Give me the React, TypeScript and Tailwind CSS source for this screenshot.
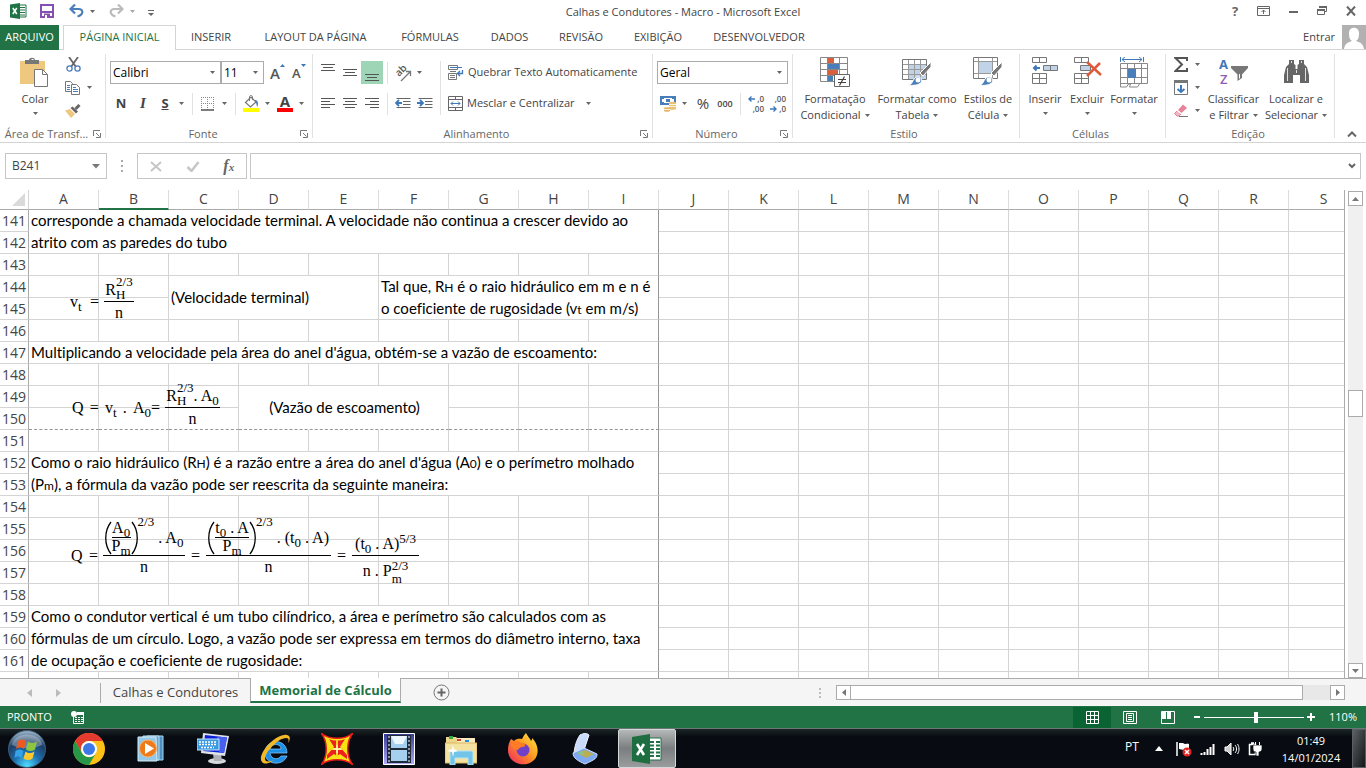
import React from "react";

type Kids = { children?: React.ReactNode };

function Svg({ w, h, children }: { w: number; h: number } & Kids) {
  return (
    <svg width={w} height={h} viewBox={`0 0 ${w} ${h}`} fill="none" aria-hidden="true" className="shrink-0">
      {children}
    </svg>
  );
}

const Arrow = ({ color = "#666" }: { color?: string }) => (
  <Svg w={5} h={3}>
    <path d="M0 0h5L2.500 3z" fill={color} />
  </Svg>
);

function Drop({ label, color }: { label: string; color?: string }) {
  return (
    <button aria-label={label} className="flex h-[22px] w-[10px] shrink-0 items-center justify-center">
      <Arrow color={color} />
    </button>
  );
}

function Tool({ label, active, children }: { label: string; active?: boolean } & Kids) {
  return (
    <button
      aria-label={label}
      className={`flex h-[23px] w-[22px] shrink-0 items-center justify-center ${active ? "bg-[#9fd5b7]" : ""}`}
    >
      {children}
    </button>
  );
}

const Sep = () => <span className="h-[22px] w-px shrink-0 bg-[#e1e1e1]" />;

function Group({ title, width, launcher, children }: { title: string; width: string; launcher?: boolean } & Kids) {
  return (
    <section className={`flex shrink-0 ${width}`}>
      <div className="flex min-w-0 flex-1 flex-col pt-[3px]">
        <div className="flex min-h-0 flex-1">{children}</div>
        <div className="flex h-4 items-center pr-1 text-[#666]">
          <span className="flex-1 text-center whitespace-nowrap">{title}</span>
          {launcher && (
            <button aria-label={`Opções de ${title}`}>
              <Svg w={8} h={8}>
                <path d="M.5 6V.5H7M3 3l3.500 3.500M7.500 3v4.500H3" stroke="#777" />
              </Svg>
            </button>
          )}
        </div>
      </div>
      <span className="my-1 w-px bg-[#e1e1e1]" />
    </section>
  );
}

function Big({ icon, lines, width, arrowBelow }: { icon: React.ReactNode; lines: string[]; width: string; arrowBelow?: boolean }) {
  return (
    <button className={`flex shrink-0 flex-col items-center pt-[4px] text-[#444] ${width}`}>
      <span className="flex h-[34px] items-start justify-center">{icon}</span>
      {lines.map((l, i) => (
        <span key={l} className="flex h-4 items-center gap-1 whitespace-nowrap">
          {l}
          {!arrowBelow && i === lines.length - 1 && <Arrow />}
        </span>
      ))}
      {arrowBelow && (
        <span className="flex h-[13px] items-center">
          <Arrow />
        </span>
      )}
    </button>
  );
}

/* ---------- icons ---------- */

const ExcelSmall = () => (
  <Svg w={17} h={16}>
    <path d="M9 2h7v12H9z" fill="#fff" stroke="#217346" />
    <path d="M10 4.500h5M10 7h5M10 9.500h5M10 12h5" stroke="#217346" />
    <path d="M0 1.500 10 0v16L0 14.500z" fill="#217346" />
    <path d="m2.800 5 4 6M6.800 5l-4 6" stroke="#fff" strokeWidth="1.600" />
  </Svg>
);

const Save = () => (
  <Svg w={14} h={14}>
    <path d="M1 1h12v12H1z" stroke="#8550b0" strokeWidth="2" />
    <path d="M1 8h12" stroke="#8550b0" strokeWidth="2" />
    <path d="M4 9.500h6V14H4z" fill="#8550b0" />
    <path d="M5 11h2v3H5z" fill="#fff" />
  </Svg>
);

const Undo = ({ color }: { color: string }) => (
  <Svg w={15} h={14}>
    <path d="M2 5h7.500c5.500 0 5 6-1 7.500" stroke={color} strokeWidth="2.200" />
    <path d="M6 .5 1.500 5 6 9.500" stroke={color} strokeWidth="2.200" />
  </Svg>
);

const Paste = () => (
  <Svg w={30} h={31}>
    <path d="M0 4h25v23H0z" fill="#edc87e" />
    <path d="M5 3h4c0-3 6-3 6 0h4v4H5z" fill="#777" />
    <path d="M11.500 2.500h2" stroke="#fff" />
    <path d="M14.500 12.500h8l5 5v12h-13z" fill="#fff" stroke="#777" />
    <path d="M22.500 12.500v5h5" stroke="#777" />
  </Svg>
);

const Cut = () => (
  <Svg w={15} h={15}>
    <path d="m3 0 7 10M12 0 5 10" stroke="#666" strokeWidth="1.800" />
    <circle cx="3.500" cy="11.500" r="2.600" stroke="#4a7ebb" strokeWidth="1.300" />
    <circle cx="11.500" cy="11.500" r="2.600" stroke="#4a7ebb" strokeWidth="1.300" />
  </Svg>
);

const Copy = () => (
  <Svg w={16} h={14}>
    <path d="M.5.5h5l2 2v8h-7z" fill="#fff" stroke="#777" />
    <path d="M2 4.500h3M2 6.500h3M2 8.500h3" stroke="#4a7ebb" />
    <path d="M6.500 3.500h5l3 3v7h-8z" fill="#fff" stroke="#777" />
    <path d="M8 6.500h3M8 8.500h5M8 10.500h5" stroke="#4a7ebb" />
  </Svg>
);

const Brush = () => (
  <Svg w={16} h={14}>
    <path d="M0 6.500 5 5l5 5-4 4z" fill="#edc87e" />
    <path d="m5.500 4 5.500 5.500 2-2L7.500 2.500z" fill="#666" />
    <path d="m10.500 5 4-4" stroke="#666" strokeWidth="3" />
  </Svg>
);

const Borders = () => (
  <Svg w={14} h={14}>
    <path d="M.5 0v13M6.500 0v13M12.500 0v13M0 .5h13M0 6.500h13" stroke="#888" strokeDasharray="1 1" />
    <path d="M0 13h13" stroke="#555" strokeWidth="1.500" />
  </Svg>
);

const Bucket = () => (
  <Svg w={16} h={17}>
    <path d="M2.500 7.500 8 2l5 5-5.500 5z" fill="#fff" stroke="#777" strokeWidth="1.200" />
    <path d="M6.500 6V2c0-2 3-2 3 0v3" stroke="#777" />
    <path d="M12 5c3 0 3.500 3 2.500 7-1.500-2-.5-4-2.500-5z" fill="#4a7ebb" />
    <path d="M0 13h16v4H0z" fill="#ff0" />
  </Svg>
);

const AlignIcon = ({ widths, right, center }: { widths: number[]; right?: boolean; center?: boolean }) => (
  <Svg w={14} h={11}>
    {widths.map((w, i) => {
      const x = right ? 14 - w : center ? (14 - w) / 2 : 0;
      return <path key={i} d={`M${x} ${i * 3 + 0.5}h${w}`} stroke="#555" />;
    })}
  </Svg>
);

const VAlign = ({ y }: { y: number }) => (
  <Svg w={14} h={20}>
    <path d={`M0 ${y + 0.5}h14M2 ${y + 3.5}h10M0 ${y + 6.5}h14`} stroke="#555" />
  </Svg>
);

const Orient = () => (
  <Svg w={18} h={18}>
    <g transform="translate(5 13) rotate(-45)">
      <text x="0" y="0" fontSize="10" fill="#555" fontFamily="Open Sans" fontWeight="600">
        ab
      </text>
    </g>
    <path d="m7 17 9-9M12 7.500h4.500V12" stroke="#777" strokeWidth="1.300" />
  </Svg>
);

const Indent = ({ flip }: { flip?: boolean }) => (
  <Svg w={16} h={11}>
    <path d="M1.500.5h14M8 3.500h7.500M8 6.500h7.500M1.500 9.500h14" stroke="#666" />
    <path d={flip ? "M0 5h6M3 2l3 3-3 3" : "M1 5h6M4 2 1 5l3 3"} stroke="#3f78b8" strokeWidth="1.800" />
  </Svg>
);

const Wrap = () => (
  <Svg w={16} h={15}>
    <path d="M.5.5h9v4h-9zM.5 8.500h8v6h-8zM2 10.500h5M2 12.500h5" stroke="#777" />
    <path d="M2 2.500h12" stroke="#3f78b8" />
    <path d="M2 6.500h6" stroke="#777" />
    <path d="M14.500 5v3.500h-5M12 6 9.500 8.500 12 11" stroke="#3f78b8" strokeWidth="1.300" />
  </Svg>
);

const Merge = () => (
  <Svg w={15} h={15}>
    <path d="M.5.5h14v14H.5zM.5 3.500h14M.5 11.500h14M7.500 0v3.500M7.500 11.500V15" stroke="#666" />
    <path d="M3 7.500h9M5 5.500l-2 2 2 2M10 5.500l2 2-2 2" stroke="#3f78b8" />
  </Svg>
);

const Money = () => (
  <Svg w={17} h={16}>
    <path d="M1 1h14v7H1z" fill="#fff" stroke="#4a7ebb" strokeWidth="2" />
    <path d="M0 0h4v3H0zM12 0h4v3h-4zM0 6h4v3H0zM6 3h4v3H6z" fill="#4a7ebb" />
    <path d="M9 6.500c0-1 7-1 7 0V13c0 1-7 1-7 0z" fill="#edc070" />
    <path d="M4 12c0-1 6-1 6 0v3c0 1-6 1-6 0z" fill="#e5b566" />
    <path d="M9 8.500h7M9 10.500h7M4 13.500h6" stroke="#fff" strokeWidth=".8" />
  </Svg>
);

const Decimals = ({ less }: { less?: boolean }) => (
  <span className="relative flex h-[20px] w-[16px] flex-col text-right text-[8px] leading-[10px] font-semibold text-[#555]">
    <span>{less ? ",00" : ",0"}</span>
    <span>{less ? ",0" : ",00"}</span>
    <span className={less ? "absolute bottom-[2px] left-0" : "absolute top-[2px] left-0"}>
      <Svg w={7} h={6}>
        <path d={less ? "M0 3h6M3.500.5 6 3 3.500 5.500" : "M7 3H1M3.500.5 1 3l2.500 2.500"} stroke="#3f78b8" strokeWidth="1.400" />
      </Svg>
    </span>
  </span>
);

const CondFormat = () => (
  <Svg w={30} h={31}>
    <path d="M.5.5h27v24H.5z" fill="#fff" />
    <path d="M8 1h6v6H8zM8 13h10v6H8z" fill="#d9603f" />
    <path d="M8 7h11v6H8zM8 19h5v6H8z" fill="#4a7ebb" />
    <path d="M.5.5h27v24H.5zM.5 6.500h27M.5 12.500h27M.5 18.500h27M7.500.5v24M19.500.5v24" stroke="#888" />
    <path d="M14.500 17.500h15v12h-15z" fill="#fff" stroke="#666" />
    <path d="M18 22.500h8M18 25.500h8M24.500 19.500l-5 9" stroke="#444" strokeWidth="1.200" />
  </Svg>
);

const PaintBrush = () => (
  <>
    <path d="m29 5-11 11 3 3L29 10z" fill="#777" stroke="#fff" />
    <path d="M6 28c6 0 4-9 11-8 4 1 4 7-3 8-3 .5-6 .5-8 0z" fill="#4a7ebb" stroke="#fff" />
    <circle cx="16" cy="23" r="2.500" fill="#fff" />
  </>
);

const TableFormat = () => (
  <Svg w={30} h={30}>
    <path d="M.5 2.500h24v20H.5z" fill="#fff" />
    <path d="M7 8h17v14H7z" fill="#c1d3e9" />
    <path d="M.5 7.500h24M.5 12.500h24M.5 17.500h24M6.500 3v19M12.500 3v19M18.500 3v19" stroke="#999" />
    <path d="M.5 2.500h24v20H.5z" stroke="#777" />
    <PaintBrush />
  </Svg>
);

const CellStyle = () => (
  <Svg w={30} h={30}>
    <path d="M.5.5h24v21H.5z" fill="#fff" />
    <path d="M6 5h13v11H6z" fill="#c1d3e9" />
    <path d="M.5 4.500h24M.5 16.500h24M5.500 0v21M19.500 0v21" stroke="#999" />
    <path d="M.5.5h24v21H.5z" stroke="#777" />
    <PaintBrush />
  </Svg>
);

const CellsInsert = ({ del }: { del?: boolean }) => (
  <Svg w={30} h={30}>
    <path d="M2.500.5h14v5h-14zM9.500.5v5M2.500 16.500h14v10h-14zM9.500 16.500v10M2.500 21.500h14" stroke="#777" />
    {del ? (
      <>
        <path d="M8.500 8.500h10v5h-10z" fill="#c1d3e9" stroke="#777" />
        <path d="m15 5 14 13M28 6 15 19" stroke="#dd5a3a" strokeWidth="2.500" />
      </>
    ) : (
      <>
        <path d="M13.500 8.500h14v5h-14zM20.500 8.500v5" fill="#c1d3e9" stroke="#777" />
        <path d="M10 11H4M6.500 8.500 4 11l2.500 2.500" stroke="#3f78b8" strokeWidth="2" />
      </>
    )}
  </Svg>
);

const CellsFormat = () => (
  <Svg w={28} h={31}>
    <path d="M.5 0v5M23.500 0v5M2 2.500h20M5 0 2 2.500 5 5M19 0l3 2.500L19 5" stroke="#3f78b8" />
    <path d="M.5 6.500h27v20H.5zM.5 11.500h27M.5 20.500h27M7.500 6.500v20M14.500 6.500v20M21.500 6.500v20" stroke="#888" />
    <path d="M8 12h8v9H8z" fill="#4a7ebb" />
    <path d="M.5 26v4h6l2-3h2l-1 3h8l2-3" stroke="#888" />
  </Svg>
);

const SortFilter = () => (
  <Svg w={29} h={32}>
    <text x="0" y="12" fontSize="13" fontWeight="700" fontFamily="Open Sans" fill="#3f78b8">
      A
    </text>
    <text x="1" y="27" fontSize="13" fontWeight="600" fontFamily="Open Sans" fill="#8e5cb5">
      Z
    </text>
    <path d="M12 9h17v2l-6 6.500V21l-4.500 3v-6.500L12 11z" fill="#777" />
    <path d="M20.500 17v4.500" stroke="#fff" />
  </Svg>
);

const Binoculars = () => (
  <Svg w={27} h={28}>
    <g transform="translate(0 2)">
      <path d="M6 1h5v4l1.500 1v4h2V6L16 5V1h5v4l3 3 2 8v8h-9v-8h-7v8H1v-8l2-8 3-3z" fill="#666" />
      <path d="M4.500 9v13M22.500 9v13M8.500 2v2M18.500 2v2M13.500 11v3" stroke="#fff" strokeWidth=".8" />
    </g>
  </Svg>
);

/* ---------- title bar and ribbon ---------- */

function TitleBar() {
  return (
    <header className="grid h-[25px] shrink-0 grid-cols-[1fr_auto_1fr] items-center">
      <div className="flex items-center pb-[3px] pl-[10px]">
        <ExcelSmall />
        <button aria-label="Salvar" className="ml-[13px]">
          <Save />
        </button>
        <button aria-label="Desfazer" className="mr-[3px] ml-[15px]">
          <Undo color="#4a7ebb" />
        </button>
        <Drop label="Opções de desfazer" />
        <button aria-label="Refazer" className="mr-[3px] ml-[12px] -scale-x-100">
          <Undo color="#bbb" />
        </button>
        <Drop label="Opções de refazer" color="#aaa" />
        <button aria-label="Personalizar barra" className="ml-[11px] pt-1">
          <Svg w={6} h={6}>
            <path d="M0 .5h6" stroke="#666" />
            <path d="M0 3h6L3 6z" fill="#666" />
          </Svg>
        </button>
      </div>
      <h1 className="text-[#444]">Calhas e Condutores - Macro - Microsoft Excel</h1>
      <div className="flex items-center justify-end gap-[15px] pr-2 pb-[3px]">
        <button aria-label="Ajuda" className="w-[14px] text-[13px] leading-4 font-bold text-[#666]">
          ?
        </button>
        <button aria-label="Opções de exibição da faixa">
          <Svg w={14} h={10}>
            <path d="M.5.5h12v9H.5zM.5 2.500h12M6.500 8V4M4.500 6l2-2 2 2" stroke="#666" />
          </Svg>
        </button>
        <button aria-label="Minimizar" className="pt-[3px]">
          <Svg w={14} h={3}>
            <path d="M3 1h9" stroke="#666" strokeWidth="2" />
          </Svg>
        </button>
        <button aria-label="Restaurar">
          <Svg w={14} h={10}>
            <path d="M4.500 2V.5h7v5H10M2.500 3.500h7v5h-7z" stroke="#666" />
            <path d="M4 1h8M2 4h8" stroke="#666" strokeWidth="2" />
          </Svg>
        </button>
        <button aria-label="Fechar">
          <Svg w={14} h={10}>
            <path d="m3 .5 8 9M11 .5l-8 9" stroke="#666" strokeWidth="2" />
          </Svg>
        </button>
      </div>
    </header>
  );
}

const TABS: [string, string][] = [
  ["INSERIR", "w-[70px]"],
  ["LAYOUT DA PÁGINA", "w-[139px]"],
  ["FÓRMULAS", "w-[90px]"],
  ["DADOS", "w-[69px]"],
  ["REVISÃO", "w-[74px]"],
  ["EXIBIÇÃO", "w-[80px]"],
  ["DESENVOLVEDOR", "w-[122px]"],
];

function RibbonTabs() {
  return (
    <nav className="flex h-[25px] shrink-0 text-[#444]">
      <button className="w-[59px] bg-[#217346] text-white">ARQUIVO</button>
      <span className="w-1 border-b border-[#d4d4d4]" />
      <button className="w-[113px] border-x border-t border-[#d4d4d4] pb-px text-[#217346]">PÁGINA INICIAL</button>
      <div className="flex flex-1 border-b border-[#d4d4d4]">
        {TABS.map(([t, w]) => (
          <button key={t} className={`whitespace-nowrap ${w}`}>
            {t}
          </button>
        ))}
        <span className="flex-1" />
        <button className="mr-[7px]">Entrar</button>
        <Svg w={24} h={24}>
          <path d="M0 0h24v24H0z" fill="#b1b1b1" />
          <path d="M7 8c0-7 10-7 10 0 0 8-3 7-3 8 2 1 7 1 8 8H2c1-7 6-7 8-8 0-1-3 0-3-8z" fill="#fff" />
        </Svg>
      </div>
    </nav>
  );
}

function Combo({ label, value, width }: { label: string; value: string; width: string }) {
  return (
    <span className={`grid h-[23px] shrink-0 items-center border border-[#ababab] ${width}`}>
      <select aria-label={label} className="col-start-1 row-start-1 h-full w-full appearance-none bg-transparent px-[2px] text-[12px] text-black">
        <option>{value}</option>
      </select>
      <span className="pointer-events-none col-start-1 row-start-1 justify-self-end pr-[5px]">
        <Arrow />
      </span>
    </span>
  );
}

function Ribbon() {
  return (
    <div className="flex h-[93px] shrink-0 border-b border-[#d4d4d4]">
      <Group title="Área de Transf..." width="w-[106px]" launcher>
        <Big icon={<Paste />} lines={["Colar"]} width="w-[54px] ml-[8px]" arrowBelow />
        <div className="flex flex-col">
          <Tool label="Recortar">
            <Cut />
          </Tool>
          <div className="flex">
            <Tool label="Copiar">
              <Copy />
            </Tool>
            <Drop label="Opções de copiar" />
          </div>
          <Tool label="Pincel de formatação">
            <Brush />
          </Tool>
        </div>
      </Group>

      <Group title="Fonte" width="w-[207px]" launcher>
        <div className="flex flex-col gap-2 pt-2 pl-1">
          <div className="flex items-center">
            <Combo label="Fonte" value="Calibri" width="w-[111px]" />
            <Combo label="Tamanho da fonte" value="11" width="w-[43px]" />
            <button aria-label="Aumentar fonte" className="ml-[6px] flex w-[16px] items-start text-[15px] leading-[18px] font-semibold text-[#555]">
              A
              <Svg w={5} h={3}>
                <path d="M0 3h5L2.500 0z" fill="#3f78b8" />
              </Svg>
            </button>
            <button aria-label="Diminuir fonte" className="ml-[6px] flex w-[16px] items-start text-[13px] leading-[18px] font-semibold text-[#555]">
              A
              <Svg w={5} h={3}>
                <path d="M0 0h5L2.500 3z" fill="#3f78b8" />
              </Svg>
            </button>
          </div>
          <div className="flex items-center text-[13px] text-[#444]">
            <Tool label="Negrito">
              <b>N</b>
            </Tool>
            <Tool label="Itálico">
              <i className="font-['Liberation_Serif',serif] text-[15px] font-bold">I</i>
            </Tool>
            <Tool label="Sublinhado">
              <b className="underline">S</b>
            </Tool>
            <Drop label="Opções de sublinhado" />
            <span className="w-[6px]" />
            <Sep />
            <span className="w-1" />
            <Tool label="Bordas">
              <Borders />
            </Tool>
            <Drop label="Opções de bordas" />
            <span className="w-[6px]" />
            <Sep />
            <span className="w-1" />
            <Tool label="Cor de preenchimento">
              <Bucket />
            </Tool>
            <Drop label="Opções de preenchimento" />
            <span className="w-[2px]" />
            <Tool label="Cor da fonte">
              <span className="flex w-[16px] flex-col items-center border-b-4 border-[#f00] text-[15px] leading-[13px] font-bold">A</span>
            </Tool>
            <Drop label="Opções de cor da fonte" />
          </div>
        </div>
      </Group>

      <Group title="Alinhamento" width="w-[340px]" launcher>
        <div className="flex flex-col gap-2 pt-2 pl-1">
          <div className="flex items-center">
            <Tool label="Alinhar em cima">
              <VAlign y={1} />
            </Tool>
            <Tool label="Alinhar no meio">
              <VAlign y={6} />
            </Tool>
            <Tool label="Alinhar embaixo" active>
              <VAlign y={11} />
            </Tool>
            <span className="w-1" />
            <Sep />
            <span className="w-1" />
            <Tool label="Orientação">
              <Orient />
            </Tool>
            <Drop label="Opções de orientação" />
          </div>
          <div className="flex items-center">
            <Tool label="Alinhar à esquerda">
              <AlignIcon widths={[14, 9, 14, 9]} />
            </Tool>
            <Tool label="Centralizar">
              <AlignIcon widths={[14, 10, 14, 10]} center />
            </Tool>
            <Tool label="Alinhar à direita">
              <AlignIcon widths={[14, 9, 14, 9]} right />
            </Tool>
            <span className="w-1" />
            <Sep />
            <span className="w-1" />
            <Tool label="Diminuir recuo">
              <Indent />
            </Tool>
            <Tool label="Aumentar recuo">
              <Indent flip />
            </Tool>
          </div>
        </div>
        <span className="mt-2 ml-1 h-[54px] w-px bg-[#e1e1e1]" />
        <div className="flex flex-col gap-2 pt-2 pl-[7px] text-[#444]">
          <button className="flex h-[23px] items-center gap-1 whitespace-nowrap">
            <Wrap />
            Quebrar Texto Automaticamente
          </button>
          <div className="flex items-center">
            <button className="flex h-[23px] items-center gap-1 whitespace-nowrap">
              <Merge />
              Mesclar e Centralizar
            </button>
            <span className="w-[9px]" />
            <Drop label="Opções de mesclar" />
          </div>
        </div>
      </Group>

      <Group title="Número" width="w-[140px]" launcher>
        <div className="flex flex-col gap-2 pt-2 pl-1">
          <Combo label="Formato de número" value="Geral" width="w-[131px]" />
          <div className="flex items-center text-[#444]">
            <Tool label="Formato contábil">
              <Money />
            </Tool>
            <Drop label="Opções de moeda" />
            <span className="w-[3px]" />
            <Tool label="Porcentagem">
              <span className="text-[15px]">%</span>
            </Tool>
            <Tool label="Separador de milhares">
              <span className="text-[9px] font-semibold">000</span>
            </Tool>
            <span className="w-1" />
            <Sep />
            <span className="w-1" />
            <Tool label="Aumentar casas decimais">
              <Decimals />
            </Tool>
            <Tool label="Diminuir casas decimais">
              <Decimals less />
            </Tool>
          </div>
        </div>
      </Group>

      <Group title="Estilo" width="w-[227px]">
        <Big icon={<CondFormat />} lines={["Formatação", "Condicional"]} width="w-[80px] ml-[2px]" />
        <Big icon={<TableFormat />} lines={["Formatar como", "Tabela"]} width="w-[84px]" />
        <Big icon={<CellStyle />} lines={["Estilos de", "Célula"]} width="w-[58px]" />
      </Group>

      <Group title="Células" width="w-[146px]">
        <Big icon={<CellsInsert />} lines={["Inserir"]} width="w-[42px] ml-1" arrowBelow />
        <Big icon={<CellsInsert del />} lines={["Excluir"]} width="w-[42px]" arrowBelow />
        <Big icon={<CellsFormat />} lines={["Formatar"]} width="w-[52px]" arrowBelow />
      </Group>

      <Group title="Edição" width="w-[169px]">
        <div className="flex flex-col pl-1">
          <div className="flex">
            <Tool label="Soma">
              <Svg w={14} h={15}>
                <path d="M13 4V1H1.500L8 7.500 1.500 14H13v-3" stroke="#555" strokeWidth="2" />
              </Svg>
            </Tool>
            <Drop label="Opções de soma" />
          </div>
          <div className="flex">
            <Tool label="Preencher">
              <Svg w={14} h={15}>
                <path d="M.5.5h13v14H.5z" stroke="#777" />
                <path d="M0 0h14v3H0z" fill="#777" />
                <path d="M7 5v7M3.500 9 7 12l3.500-3" stroke="#3f78b8" strokeWidth="2" />
              </Svg>
            </Tool>
            <Drop label="Opções de preencher" />
          </div>
          <div className="flex">
            <Tool label="Limpar">
              <Svg w={15} h={13}>
                <path d="m4 6 5-5.500L13 4 7.500 9z" fill="#e8829a" />
                <path d="M3 7 .5 9.500 3 12h2l2-2" fill="#f3b5c3" stroke="#e8829a" />
                <path d="M5 12.500h9" stroke="#777" />
              </Svg>
            </Tool>
            <Drop label="Opções de limpar" />
          </div>
        </div>
        <Big icon={<SortFilter />} lines={["Classificar", "e Filtrar"]} width="w-[63px]" />
        <Big icon={<Binoculars />} lines={["Localizar e", "Selecionar"]} width="w-[62px]" />
      </Group>

      <button aria-label="Recolher faixa de opções" className="mb-[5px] ml-[12px] self-end">
        <Svg w={10} h={6}>
          <path d="m1 5.500 4-4 4 4" stroke="#666" strokeWidth="2" />
        </Svg>
      </button>
    </div>
  );
}

function FormulaBar() {
  return (
    <div className="flex h-[47px] shrink-0 items-start pt-[10px] pr-[5px] pl-[5px]">
      <div className="flex h-[26px] w-[102px] items-center border border-[#c6c6c6] pr-[6px]">
        <input aria-label="Caixa de nome" defaultValue="B241" className="w-full min-w-0 pl-[6px] text-[12px] text-[#444] outline-none" />
        <Svg w={8} h={5}>
          <path d="M0 0h8L4 4.500z" fill="#777" />
        </Svg>
      </div>
      <span className="flex h-[26px] w-[30px] items-center justify-center">
        <Svg w={2} h={12}>
          <path d="M0 1h2M0 6h2M0 11h2" stroke="#aaa" strokeWidth="2" />
        </Svg>
      </span>
      <div className="flex h-[26px] w-[110px] items-center justify-around border border-[#c6c6c6]">
        <button aria-label="Cancelar">
          <Svg w={12} h={11}>
            <path d="m1 1 10 9M11 1 1 10" stroke="#c6c6c6" strokeWidth="2" />
          </Svg>
        </button>
        <button aria-label="Inserir valor">
          <Svg w={14} h={11}>
            <path d="m1.500 6 4 4 7-9" stroke="#c6c6c6" strokeWidth="2.500" />
          </Svg>
        </button>
        <button aria-label="Inserir função" className="font-['Liberation_Serif',serif] text-[16px] leading-4 font-bold text-[#666] italic">
          f<span className="text-[11px]">x</span>
        </button>
      </div>
      <div className="ml-[3px] flex h-[26px] flex-1 items-center border border-[#c6c6c6] pr-1">
        <input aria-label="Barra de fórmulas" className="h-full min-w-0 flex-1 px-2 outline-none" />
        <Svg w={8} h={6}>
          <path d="m1 1 3 3 3-3" stroke="#666" strokeWidth="2" />
        </Svg>
      </div>
    </div>
  );
}

/* ---------- formulas ---------- */

function Frac({ num, den, tall, width }: { num: React.ReactNode; den: React.ReactNode; tall?: boolean; width: string }) {
  const row = tall ? "h-[38px]" : "h-[26px]";
  return (
    <span className={`flex flex-col items-center ${width}`}>
      <span className={`flex items-end justify-center ${row}`}>{num}</span>
      <span className="h-px w-full bg-black" />
      <span className={`flex items-start justify-center pt-[3px] ${row}`}>{den}</span>
    </span>
  );
}

const Sub = ({ children }: Kids) => <span className="relative top-[4px] text-[13px] leading-none">{children}</span>;
const Raised = ({ children }: Kids) => <span className="mb-[3px]">{children}</span>;

const SubSup = ({ sub, sup }: { sub: string; sup: string }) => (
  <span className="flex flex-col text-[13px] leading-[13px]">
    <span>{sup}</span>
    <span>{sub}</span>
  </span>
);

const A0 = () => (
  <span>
    A<Sub>0</Sub>
  </span>
);

const T0A = () => (
  <span>
    t<Sub>0</Sub> . A
  </span>
);

const Pm = () => (
  <span>
    P<Sub>m</Sub>
  </span>
);

const Paren = ({ right }: { right?: boolean }) => (
  <Svg w={7} h={34}>
    <path d={right ? "M1 1c7 9 7 23 0 32" : "M6 1c-7 9-7 23 0 32"} stroke="#000" strokeWidth="1.300" />
  </Svg>
);

const Inner = ({ top, width }: { top: React.ReactNode; width: string }) => (
  <span className={`flex flex-col items-center ${width}`}>
    <span className="h-[17px]">{top}</span>
    <span className="h-px w-full bg-black" />
    <span className="h-[17px]">
      <Pm />
    </span>
  </span>
);

const PowerOf = ({ top, width }: { top: React.ReactNode; width: string }) => (
  <>
    <Paren />
    <Inner width={width} top={top} />
    <Paren right />
    <span className="-mt-[2px] self-start text-[13px] leading-[8px]">2/3</span>
  </>
);

function Formulas() {
  const base = "absolute flex items-center whitespace-nowrap font-['Liberation_Serif',serif] text-[16px] leading-[16px] text-black";
  return (
    <>
      <div className={`${base} top-[85px] left-[70px]`}>
        <span className="mr-[5px] flex w-[29px] justify-between">
          <span>
            v<Sub>t</Sub>
          </span>
          <span>=</span>
        </span>
        <Frac width="w-[30px]" num={<><Raised>R</Raised><SubSup sup="2/3" sub="H" /></>} den="n" />
      </div>
      <div className={`${base} top-[191px] left-[72px]`}>
        <span className="mr-[5px] flex w-[88px] justify-between">
          <span>Q</span>
          <span>=</span>
          <span>
            v<Sub>t</Sub>
          </span>
          <span>.</span>
          <span>
            A<Sub>0</Sub>=
          </span>
        </span>
        <Frac width="w-[55px]" num={<><Raised>R</Raised><SubSup sup="2/3" sub="H" /><Raised>. <A0 /></Raised></>} den="n" />
      </div>
      <div className={`${base} top-[327px] left-[71px]`}>
        <span className="mr-[5px] flex w-[27px] justify-between">
          <span>Q</span>
          <span>=</span>
        </span>
        <Frac
          tall
          width="w-[82px]"
          num={
            <span className="flex items-center">
              <PowerOf width="w-[19px]" top={<A0 />} />
              <span className="ml-1">. <A0 /></span>
            </span>
          }
          den="n"
        />
        <span className="w-[21px] text-center">=</span>
        <Frac
          tall
          width="w-[125px]"
          num={
            <span className="flex items-center">
              <PowerOf width="w-[34px]" top={<T0A />} />
              <span className="ml-1">. (<T0A />)</span>
            </span>
          }
          den="n"
        />
        <span className="w-[21px] text-center">=</span>
        <Frac
          width="w-[67px]"
          num={<><Raised>(<T0A />)</Raised><span className="mb-[10px] text-[13px] leading-[13px]">5/3</span></>}
          den={<><span className="pt-[4px]">n . P</span><SubSup sup="2/3" sub="m" /></>}
        />
      </div>
    </>
  );
}

/* ---------- sheet ---------- */

type Cell = { span?: number; rows?: number; center?: boolean; text?: React.ReactNode };
const Small = ({ children }: Kids) => <span className="text-[12px] leading-none">{children}</span>;
const blanks = (n: number): Cell[] => Array.from({ length: n }, () => ({}));

const ROWS: Record<number, Cell[]> = {
  141: [{ span: 9, rows: 2, text: <>corresponde a chamada velocidade terminal. A velocidade não continua a crescer devido ao<br />atrito com as paredes do tubo</> }],
  142: [],
  144: [
    ...blanks(2),
    { span: 3, rows: 2, text: "(Velocidade terminal)" },
    { span: 4, rows: 2, text: <>Tal que, R<Small>H</Small> é o raio hidráulico em m e n é<br />o coeficiente de rugosidade (v<Small>t</Small> em m/s)</> },
  ],
  145: blanks(2),
  147: [{ span: 9, text: "Multiplicando a velocidade pela área do anel d'água, obtém-se a vazão de escoamento:" }],
  149: [...blanks(3), { span: 3, rows: 2, center: true, text: "(Vazão de escoamento)" }, ...blanks(3)],
  150: blanks(6),
  152: [{ span: 9, rows: 2, text: <>Como o raio hidráulico (R<Small>H</Small>) é a razão entre a área do anel d'água (A<Small>0</Small>) e o perímetro molhado<br />(P<Small>m</Small>), a fórmula da vazão pode ser reescrita da seguinte maneira:</> }],
  153: [],
  159: [{ span: 9, rows: 3, text: <>Como o condutor vertical é um tubo cilíndrico, a área e perímetro são calculados com as<br />fórmulas de um círculo. Logo, a vazão pode ser expressa em termos do diâmetro interno, taxa<br />de ocupação e coeficiente de rugosidade:</> }],
  160: [],
  161: [],
};

const COLS = "ABCDEFGHIJKLMNOPQRS".split("");
const NUMS = Array.from({ length: 22 }, (_, i) => 141 + i);

function Sheet() {
  return (
    <div className="flex min-h-0 flex-1">
      <div className="relative min-w-0 flex-1 overflow-hidden border-r border-[#ababab]">
        <table className="w-[1359px] table-fixed border-separate border-spacing-0 font-[Lato,sans-serif] text-[15px] leading-[22px] text-black [font-variant-ligatures:none]">
          <colgroup>
            <col className="w-[29px]" />
            {COLS.map((c) => (
              <col key={c} className="w-[70px]" />
            ))}
          </colgroup>
          <thead className="font-['Open_Sans',sans-serif] text-[14px] leading-[18px] text-[#444]">
            <tr>
              <th aria-label="Selecionar tudo" className="h-5 border-r border-b border-[#ababab] border-r-[#d4d4d4] p-0">
                <span className="flex justify-end pr-[3px]">
                  <Svg w={13} h={13}>
                    <path d="M13 0v13H0z" fill="#dadada" />
                  </Svg>
                </span>
              </th>
              {COLS.map((c) => (
                <th
                  key={c}
                  className={`h-5 border-r border-r-[#dcdcdc] p-0 align-top font-normal ${c === "B" ? "border-b-2 border-b-[#217346]" : "border-b border-b-[#ababab]"}`}
                >
                  {c}
                </th>
              ))}
            </tr>
          </thead>
          <tbody>
            {NUMS.map((n) => {
              const left = ROWS[n] ?? blanks(9);
              let col = n === 150 ? 3 : 0;
              return (
                <tr key={n}>
                  <th className="h-[22px] border-r border-b border-r-[#ababab] border-b-[#d4d4d4] p-0 pr-[2px] text-right font-['Open_Sans',sans-serif] text-[14px] leading-[21px] font-normal text-[#444]">
                    {n}
                  </th>
                  {left.map((c, i) => {
                    col += c.span ?? 1;
                    const dashed = n === 150 || (n === 149 && c.rows === 2);
                    return (
                      <td
                        key={i}
                        colSpan={c.span}
                        rowSpan={c.rows}
                        className={`h-[22px] border-r border-b p-0 pl-[2px] whitespace-nowrap ${col === 9 ? "border-r-[#969696]" : "border-r-[#d4d4d4]"} ${dashed ? "border-b-[#969696] [border-bottom-style:dashed]" : "border-b-[#d4d4d4]"} ${c.center ? "text-center" : ""}`}
                      >
                        {c.text && <div className="-mt-px">{c.text}</div>}
                      </td>
                    );
                  })}
                  {COLS.slice(9).map((c) => (
                    <td key={c} className="h-[22px] border-r border-b border-[#d4d4d4] p-0" />
                  ))}
                </tr>
              );
            })}
          </tbody>
        </table>
        <Formulas />
      </div>
      <div className="flex w-[21px] flex-col items-center pt-px">
        <button aria-label="Rolar para cima" className="flex h-[15px] w-[15px] items-center justify-center border border-[#ababab]">
          <Svg w={7} h={4}>
            <path d="M0 4h7L3.500 0z" fill="#777" />
          </Svg>
        </button>
        <div className="flex w-[15px] flex-1 flex-col bg-[#f0f0f0]">
          <span className="flex-[184]" />
          <span className="h-[27px] border border-[#ababab] bg-white" />
          <span className="flex-[246]" />
        </div>
        <button aria-label="Rolar para baixo" className="flex h-[15px] w-[15px] items-center justify-center border border-[#ababab]">
          <Svg w={7} h={4}>
            <path d="M0 0h7L3.500 4z" fill="#777" />
          </Svg>
        </button>
      </div>
    </div>
  );
}

function SheetTabs() {
  return (
    <div className="flex h-7 shrink-0 bg-[#f5f5f5] text-[12px]">
      <div className="flex w-[100px] items-center justify-center gap-[24px] border-t border-[#ababab] pr-[13px]">
        <button aria-label="Planilha anterior">
          <Svg w={5} h={8}>
            <path d="M5 0v8L0 4z" fill="#bbb" />
          </Svg>
        </button>
        <button aria-label="Próxima planilha">
          <Svg w={5} h={8}>
            <path d="M0 0v8l5-4z" fill="#bbb" />
          </Svg>
        </button>
      </div>
      <div className="flex w-[150px] items-center border-t border-[#ababab]">
        <span className="h-5 w-px bg-[#ababab]" />
        <button className="flex-1 text-center text-[13px] text-[#444]">Calhas e Condutores</button>
      </div>
      <button className="mb-[3px] w-[151px] border-x border-b-2 border-x-[#ababab] border-b-[#217346] bg-white pt-[3px] text-[13px] font-bold text-[#217346]">
        Memorial de Cálculo
      </button>
      <div className="flex flex-1 items-center border-t border-[#ababab] pr-[21px] pl-8">
        <button aria-label="Nova planilha">
          <Svg w={17} h={17}>
            <circle cx="8.500" cy="8.500" r="7.500" stroke="#777" />
            <path d="M4.500 8.500h8M8.500 4.500v8" stroke="#666" strokeWidth="2" />
          </Svg>
        </button>
        <span className="flex-1" />
        <span className="mr-[15px]">
          <Svg w={2} h={10}>
            <path d="M0 1h2M0 5h2M0 9h2" stroke="#aaa" strokeWidth="1.500" />
          </Svg>
        </span>
        <div className="flex h-[15px] w-[509px]">
          <button aria-label="Rolar para a esquerda" className="flex w-[15px] items-center justify-center border border-[#ababab] bg-white">
            <Svg w={4} h={7}>
              <path d="M4 0v7L0 3.500z" fill="#777" />
            </Svg>
          </button>
          <span className="w-[452px] border border-l-0 border-[#ababab] bg-white" />
          <span className="flex-1 bg-[#e8e8e8]" />
          <button aria-label="Rolar para a direita" className="flex w-[15px] items-center justify-center border border-[#ababab] bg-white">
            <Svg w={4} h={7}>
              <path d="M0 0v7l4-3.500z" fill="#777" />
            </Svg>
          </button>
        </div>
      </div>
    </div>
  );
}

function StatusBar() {
  return (
    <div className="flex h-[22px] shrink-0 items-center bg-[#217346] pl-[7px] text-white">
      <span className="w-[64px]">PRONTO</span>
      <button aria-label="Gravar macro">
        <Svg w={14} h={13}>
          <path d="M2.500 4v8.500h10v-11H6" stroke="#fff" />
          <path d="M6 1h7v3H6z" fill="#fff" />
          <circle cx="3" cy="3" r="3" fill="#fff" />
          <path d="M4 6.500h8M4 8.500h8M4 10.500h8" stroke="#fff" strokeDasharray="2 1" />
        </Svg>
      </button>
      <span className="flex-1" />
      <button aria-label="Normal" className="flex h-[21px] w-[38px] items-center justify-center bg-[#0a6332]">
        <Svg w={13} h={13}>
          <path d="M.5.5h12v12H.5zM4.500 0v13M8.500 0v13M0 4.500h13M0 8.500h13" stroke="#fff" />
        </Svg>
      </button>
      <button aria-label="Layout da página" className="flex w-[38px] items-center justify-center">
        <Svg w={14} h={13}>
          <path d="M.5.5h13v12H.5zM3.500 2.500h7v8h-7zM5 4.500h4M5 6.500h4M5 8.500h4" stroke="#fff" />
        </Svg>
      </button>
      <button aria-label="Visualização de quebra" className="mr-[5px] flex w-[38px] items-center justify-center">
        <Svg w={14} h={13}>
          <path d="M.5.5h13v12H.5z" stroke="#fff" />
          <path d="M1 1h4v7H1zM6 1h4v7H6z" fill="#fff" />
        </Svg>
      </button>
      <button aria-label="Reduzir zoom">
        <Svg w={10} h={10}>
          <path d="M2 5h6" stroke="#fff" strokeWidth="2" />
        </Svg>
      </button>
      <input
        type="range"
        aria-label="Zoom"
        min={0}
        max={100}
        defaultValue={52}
        className="mx-[2px] h-3 w-[100px] appearance-none bg-[linear-gradient(#fff,#fff)] bg-[length:100%_1px] bg-center bg-no-repeat [&::-webkit-slider-thumb]:h-[11px] [&::-webkit-slider-thumb]:w-1 [&::-webkit-slider-thumb]:appearance-none [&::-webkit-slider-thumb]:bg-white"
      />
      <button aria-label="Ampliar zoom">
        <Svg w={10} h={10}>
          <path d="M1 5h8M5 1v8" stroke="#fff" strokeWidth="2" />
        </Svg>
      </button>
      <span className="w-[50px] pr-[9px] text-right">110%</span>
    </div>
  );
}

/* ---------- taskbar ---------- */

const Start = () => (
  <Svg w={38} h={38}>
    <defs>
      <radialGradient id="orb" cx=".5" cy=".95" r=".9">
        <stop offset="0" stopColor="#4fe0ff" />
        <stop offset=".4" stopColor="#1c6fb0" />
        <stop offset=".75" stopColor="#1d3f66" />
        <stop offset="1" stopColor="#8fa9bf" />
      </radialGradient>
    </defs>
    <circle cx="19" cy="19" r="18.500" fill="url(#orb)" stroke="#3d5a75" />
    <path d="M4 15C6 1 32 1 34 15c-8 4-22 4-30 0z" fill="#fff" opacity=".3" />
    <path d="M10 11c3-2 5-2 8 0l-2 8c-3-2-5-2-8 0z" fill="#ee5a24" />
    <path d="M20 11.500c3 2 5 2 9 0l-2 8c-3 2-6 2-9 0z" fill="#8cc63f" />
    <path d="M7.500 21c3-2 5-2 8 0l-2 7c-3-2-4-2-7 0z" fill="#36a3e8" />
    <path d="M17.500 21.500c3 2 5 2 9 0l-2 7c-3 2-6 2-9 0z" fill="#fdc82f" />
  </Svg>
);

const Chrome = () => (
  <Svg w={32} h={32}>
    <circle cx="16" cy="16" r="16" fill="#fbc116" />
    <path d="M2.100 8A16 16 0 0 1 29.900 8H16a8 8 0 0 0-7 12z" fill="#e33b2e" />
    <path d="M2.100 8 9 20a8 8 0 0 0 14 0l-7 12A16 16 0 0 1 2.100 8z" fill="#279847" />
    <circle cx="16" cy="16" r="8" fill="#fff" />
    <circle cx="16" cy="16" r="6" fill="#3c78e7" />
  </Svg>
);

const Media = () => (
  <Svg w={28} h={27}>
    <path d="M10 1h16v24H10z" fill="#4f91c4" stroke="#a9d4ee" />
    <path d="M6 1h16v24H6z" fill="#65a6d3" stroke="#b8def2" />
    <path d="M1 2h18l1 24H1z" fill="#93c8e8" stroke="#d5ecf7" />
    <circle cx="11" cy="13.500" r="8.500" fill="#ef7a1a" stroke="#f8b26a" />
    <path d="m8 8 9 5.500L8 19z" fill="#fff" />
  </Svg>
);

const Monitor = () => (
  <Svg w={32} h={32}>
    <ellipse cx="20" cy="28" rx="9" ry="3" fill="#d6d9dc" />
    <path d="M16 21h8l1 7h-8z" fill="#aeb2b8" />
    <path d="m6 0 26 3-4 20L4 20z" fill="#dfe3e8" />
    <path d="m8 2 22 2.500L27 20 6 18z" fill="#0b20d8" />
    <path d="m20 3.500 10 1L27 20l-5-1z" fill="#4860f0" />
    <path d="M0 6h22v11H0z" fill="#3c9ae0" stroke="#c6e4f8" />
    <path d="M2 9h18M2 11.500h18M4 14.500h13" stroke="#fff" strokeWidth="1.500" strokeDasharray="2 1" />
  </Svg>
);

const Explorer = () => (
  <Svg w={32} h={32}>
    <path d="M28 20H11c1 7 9 7 11 3h6c-4 11-23 9-22-4C7 5 28 5 28 20zM11 16h11c0-6-10-6-11 0z" fill="#1e8fe6" stroke="#8bd0fa" strokeWidth=".7" />
    <path d="M3 29c-6-7 14-29 25-27 5 1 2 7 1 8 1-3 1-5-2-5C18 5 2 24 7 28c2 1 6 0 8-1-4 3-9 5-12 2z" fill="#f2b828" />
  </Svg>
);

const Flower = () => (
  <Svg w={32} h={32}>
    <path d="M0 0c8 7 24 7 32 0-7 8-7 24 0 32-8-7-24-7-32 0C7 24 7 8 0 0z" fill="#f7e313" stroke="#e81c1c" strokeWidth="1.500" />
    <path d="M8 6c4 2 12 2 16 0l-5 8 7 8v4l-7-5-3 2-3-2-7 5v-4l7-8z" fill="#ee1f1f" />
    <path d="M16 7v17M8 16h16" stroke="#f8d51c" strokeWidth="2" />
    <path d="M16 12v8M12 16h8" stroke="#fff" />
  </Svg>
);

const Film = () => (
  <Svg w={32} h={32}>
    <defs>
      <linearGradient id="film" x1="0" y1="0" x2="0" y2="1">
        <stop stopColor="#343a94" />
        <stop offset="1" stopColor="#b3adf8" />
      </linearGradient>
    </defs>
    <path d="M.5.5h31v31H.5z" fill="url(#film)" stroke="#fff" />
    <path d="M4 2h24v28H4z" fill="#222b38" />
    <path d="M8 3h16v12H8zM8 17h16v11H8z" fill="#a5d1ef" />
    <path d="M8 3h16l-4 8h-8z" fill="#eef7fd" />
    <path d="M6 3v27M26 3v27" stroke="#8d96a8" strokeWidth="2" strokeDasharray="2 2" />
  </Svg>
);

const Folder = () => (
  <Svg w={32} h={32}>
    <path d="M1 4h10l2 2h17v24H1z" fill="#edd68a" />
    <path d="M4 3h4v3H4z" fill="#38a845" />
    <path d="M12 5h18v5H12z" fill="#f7ecc0" />
    <path d="M12 6h4v2h-4z" fill="#d84432" />
    <path d="M20 7h4v2h-4z" fill="#2b8ee0" />
    <path d="M0 10h32v20H0z" fill="#f4e2a0" stroke="#d9b760" />
    <path d="M5 32V21c0-3 1-3 3-3h17c3 0 3 1 3 3v11h-5v-7H10v7z" fill="#72c4e9" stroke="#b5e4f6" />
    <path d="m8 12 1 4 4 2-4 1-1 5-1-5-5-1 5-2z" fill="#fff" />
  </Svg>
);

const Firefox = () => (
  <Svg w={32} h={32}>
    <defs>
      <linearGradient id="fox" x1="1" y1="0" x2="0" y2="1">
        <stop stopColor="#fff04a" />
        <stop offset=".45" stopColor="#ff9a1f" />
        <stop offset="1" stopColor="#ee2066" />
      </linearGradient>
    </defs>
    <path d="M19 0c2 4 4 5 5 8 1-1 1-2 1-3 4 4 7 10 5 17C26 36 1 34 1 17 1 13 2 9 4 6l3 2c3-3 6-2 8-2 1-2 2-4 4-6z" fill="url(#fox)" />
    <circle cx="16" cy="17" r="6.500" fill="#7140c8" />
    <path d="M4 10c4-3 8-2 10 0 3 0 5 1 4 3-3 2-5 0-7 4-3-1-6 0-7-7z" fill="#ff7b25" />
  </Svg>
);

const Scanner = () => (
  <Svg w={26} h={32}>
    <path d="M8 2c4-2 7-2 9 0l-5 15-10 3c1-7 2-12 6-18z" fill="#c9dcfb" stroke="#f1f6ff" />
    <path d="m1 20 11-5 13 6c0 4-1 5-12 10C6 28 1 25 1 20z" fill="#7da9f3" stroke="#cfe0ff" />
    <path d="m5 20 8-3 9 4-8 4z" fill="#b9ae55" />
    <path d="m5 20 5-2 2 4z" fill="#81c98c" />
  </Svg>
);

const ExcelBig = () => (
  <Svg w={30} h={30}>
    <path d="M16 4h13v22H16z" fill="#fff" stroke="#217346" />
    <path d="M18 8h4M24 8h4M18 11.500h4M24 11.500h4M18 15h4M24 15h4M18 18.500h4M24 18.500h4M18 22h4M24 22h4" stroke="#217346" strokeWidth="2" />
    <path d="M0 3 18 0v30L0 27z" fill="#1f6e42" />
    <path d="m5 10 7 11M12 10 5 21" stroke="#fff" strokeWidth="2.600" />
  </Svg>
);

const APPS: [string, React.ReactNode][] = [
  ["Chrome", <Chrome />],
  ["Media Player", <Media />],
  ["Teclado", <Monitor />],
  ["Internet Explorer", <Explorer />],
  ["Editor de imagens", <Flower />],
  ["Editor de vídeo", <Film />],
  ["Pastas", <Folder />],
  ["Firefox", <Firefox />],
  ["Scanner", <Scanner />],
];

function Taskbar() {
  return (
    <footer className="flex h-10 shrink-0 items-stretch border-t border-[#6b7675] bg-linear-to-b from-[#1b2526] to-[#080c12] to-20% text-white">
      <button aria-label="Iniciar" className="mr-[4px] flex w-[54px] items-center justify-center">
        <Start />
      </button>
      {APPS.map(([name, icon]) => (
        <button key={name} aria-label={name} className="flex w-[62px] items-center justify-center">
          {icon}
        </button>
      ))}
      <button
        aria-label="Excel"
        className="mx-[2px] flex w-[58px] items-center justify-center rounded-xs border border-[#d5d8d8] bg-linear-to-b from-[#b5b8b8] via-[#7b7e80] to-[#9a9c9d]"
      >
        <ExcelBig />
      </button>
      <span className="flex-1" />
      <div className="flex items-center">
        <button className="w-5 pb-1 text-center text-[12px]">PT</button>
        <button aria-label="Mostrar ícones ocultos" className="mr-[9px] ml-[13px]">
          <Svg w={8} h={5}>
            <path d="M0 5h8L4 0z" fill="#fff" />
          </Svg>
        </button>
        <button aria-label="Central de ações" className="ml-1">
          <Svg w={16} h={16}>
            <path d="M1 1v14" stroke="#fff" strokeWidth="1.500" />
            <path d="M3 2h4c2 2 4 0 6 1v6H8L3 8z" fill="#fff" />
            <circle cx="11" cy="11" r="4.500" fill="#e02424" />
            <path d="m9 9 4 4M13 9l-4 4" stroke="#fff" strokeWidth="1.500" />
          </Svg>
        </button>
        <button aria-label="Rede" className="ml-2">
          <Svg w={16} h={12}>
            <path d="M1.500 10v2M4.500 9v3M7.500 6v6M10.500 4v8M13.500 1v11" stroke="#fff" strokeWidth="2" />
          </Svg>
        </button>
        <button aria-label="Volume" className="ml-2">
          <Svg w={16} h={14}>
            <path d="M1 5h2l4-4v12L3 9H1z" fill="#ccc" stroke="#fff" />
            <path d="M9 5c1 1 1 3 0 4M11 3c2 2 2 6 0 8M13.500 2c2 3 2 7 0 10" stroke="#fff" />
          </Svg>
        </button>
        <button aria-label="Bateria" className="ml-2">
          <Svg w={14} h={15}>
            <path d="M1.500 3.500h6v10h-6zM3 2h3" stroke="#fff" strokeWidth="1.500" />
            <path d="M5 4h9v4c0 2-2 3-3 3v4H8v-4c-2 0-3-1-3-3z" fill="#fff" stroke="#080c12" strokeWidth=".7" />
            <path d="M7 1h1v3H7zM11 1h1v3h-1z" fill="#fff" />
          </Svg>
        </button>
      </div>
      <div className="flex w-[90px] flex-col items-center justify-center pl-2 text-[11px] leading-[17px]">
        <span>01:49</span>
        <span>14/01/2024</span>
      </div>
      <button aria-label="Mostrar área de trabalho" className="w-[14px] border border-[#5a5f62] bg-linear-to-br from-[#5c6164] to-[#14181b]" />
    </footer>
  );
}

export default function App() {
  return (
    <div className="flex h-screen flex-col overflow-hidden bg-white font-['Open_Sans',sans-serif] text-[11px]">
      <TitleBar />
      <RibbonTabs />
      <Ribbon />
      <FormulaBar />
      <Sheet />
      <SheetTabs />
      <StatusBar />
      <Taskbar />
    </div>
  );
}
